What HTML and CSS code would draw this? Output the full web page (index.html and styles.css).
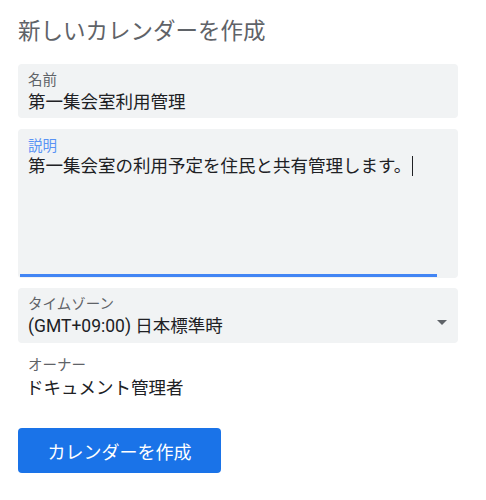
FILE: index.html
```html
<!DOCTYPE html>
<html lang="ja">
  <head>
    <meta charset="UTF-8" />
    <meta name="viewport" content="width=device-width, initial-scale=1.0" />
    <title>新しいカレンダーを作成</title>
    <link rel="stylesheet" href="styles.css">
  </head>
  <body>
    <div class="page">
      <h1 class="title">新しいカレンダーを作成</h1>

      <div class="field name-field">
        <div class="field-label">名前</div>
        <div class="field-value">第一集会室利用管理</div>
      </div>

      <div class="field desc-field">
        <div class="field-label focused">説明</div>
        <div class="field-value desc-value">第一集会室の利用予定を住民と共有管理します。<span class="cursor"></span></div>
        <div class="underline"></div>
      </div>

      <div class="field tz-field">
        <div class="tz-text">
          <div class="field-label">タイムゾーン</div>
          <div class="field-value">(GMT+09:00) 日本標準時</div>
        </div>
        <svg class="arrow" width="10" height="5" viewBox="0 0 10 5">
          <path d="M0 0 L10 0 L5 5 Z" fill="#5f6368" />
        </svg>
      </div>

      <div class="owner">
        <div class="field-label">オーナー</div>
        <div class="owner-value">ドキュメント管理者</div>
      </div>

      <button class="create-btn">カレンダーを作成</button>
    </div>
  </body>
</html>
```

FILE: styles.css
```css
body {
  margin: 0;
  background: #fff;
  font-family: Roboto, "Noto Sans CJK JP", sans-serif;
  color: #202124;
}
.page {
  padding: 17px 18px;
  width: 440px;
}
.title {
  margin: 0 0 19px;
  font-size: 22.5px;
  line-height: 28px;
  font-weight: 400;
  color: #5f6368;
}
.field {
  background-color: #f1f3f4;
  border-radius: 4px;
  padding: 8px 10px 0;
  box-sizing: border-box;
}
.name-field {
  height: 54px;
  margin-bottom: 11px;
}
.field-label {
  font-size: 14.5px;
  line-height: 18px;
  color: #5f6368;
}
.field-label.focused {
  color: #5a93f5;
}
.field-value {
  font-size: 17.5px;
  line-height: 24px;
}
.desc-field {
  height: 149px;
  padding-top: 9px;
  margin-bottom: 10px;
  display: flex;
  flex-direction: column;
}
.desc-value {
  line-height: 20px;
  flex: 1;
}
.cursor {
  display: inline-block;
  width: 1px;
  height: 20px;
  background: #202124;
  margin-left: 1px;
  vertical-align: top;
}
.underline {
  height: 3px;
  width: 417px;
  margin-left: -8px;
  background-color: #4285f4;
  margin-bottom: 1px;
}
.tz-field {
  height: 55px;
  display: flex;
  align-items: flex-start;
  justify-content: space-between;
}
.arrow {
  margin-top: 24px;
  margin-right: 1px;
}
.owner {
  margin-top: 14px;
  padding-left: 10px;
}
.owner-value {
  font-size: 17.5px;
  line-height: 26px;
  margin-left: -2px;
}
.create-btn {
  margin-top: 27px;
  width: 203px;
  height: 45px;
  border: none;
  border-radius: 4px;
  background-color: #1a73e8;
  color: #fff;
  font-family: Roboto, "Noto Sans CJK JP", sans-serif;
  font-size: 18px;
  padding: 0;
}
```
